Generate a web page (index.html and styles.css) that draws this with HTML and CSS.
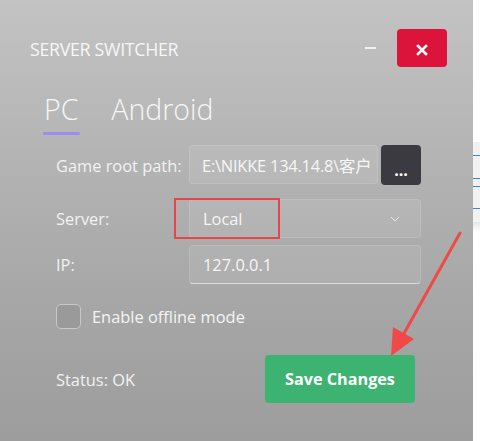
FILE: index.html
```html
<!DOCTYPE html>
<html>
<head>
<meta charset="utf-8">
<link rel="stylesheet" href="styles.css">
</head>
<body>
<div class="screen">
  <div class="window">
    <div class="titlebar">
      <span class="title">SERVER SWITCHER</span>
      <span class="minimize"></span>
      <button class="close">
        <svg width="12" height="12" viewBox="0 0 12 12"><path d="M2 2 L10 10 M10 2 L2 10" stroke="#fff" stroke-width="2.6" stroke-linecap="square"/></svg>
      </button>
    </div>
    <div class="tabs">
      <div class="tab active">PC</div>
      <div class="tab">Android</div>
    </div>
    <div class="form">
      <div class="row row-path">
        <span class="label">Game root path:</span>
        <div class="path-group">
          <div class="field path-field"><span class="path-text">E:\NIKKE 134.14.8\客户</span></div>
          <button class="browse">...</button>
        </div>
      </div>
      <div class="row row-server">
        <span class="label">Server:</span>
        <div class="field select">
          <span>Local</span>
          <svg class="chevron" width="10" height="6" viewBox="0 0 10 6"><path d="M1 1 L5 5 L9 1" fill="none" stroke="#e8e8e8" stroke-width="1"/></svg>
        </div>
      </div>
      <div class="row row-ip">
        <span class="label">IP:</span>
        <div class="field ip">127.0.0.1</div>
      </div>
      <label class="check-row">
        <span class="checkbox"></span>
        <span class="check-label">Enable offline mode</span>
      </label>
      <div class="footer">
        <span class="status">Status: OK</span>
        <button class="save">Save Changes</button>
      </div>
    </div>
  </div>
  <div class="behind">
    <div class="behind-panel">
      <div class="bline l1"></div>
      <div class="bline l2"></div>
      <div class="bline l3"></div>
      <div class="bline l4"></div>
    </div>
    <div class="behind-shadow"></div>
  </div>
  <div class="annot-rect"></div>
  <svg class="annot-arrow" width="480" height="441" viewBox="0 0 480 441">
    <line x1="460" y1="233" x2="402" y2="337" stroke="#ee4a4a" stroke-width="3" stroke-linecap="round"/>
    <polygon points="393,327 414,339 391,356" fill="#ee4a4a"/>
  </svg>
</div>
</body>
</html>
```
FILE: styles.css
```css
* { box-sizing: border-box; }
html, body { margin: 0; padding: 0; }
body {
  width: 480px;
  height: 441px;
  overflow: hidden;
  font-family: "Open Sans", "Noto Sans", "Noto Sans CJK SC", sans-serif;
  color: #f4f4f4;
}
.screen {
  position: relative;
  display: flex;
  width: 480px;
  height: 441px;
}
.window {
  width: 473px;
  height: 441px;
  background: linear-gradient(180deg, #c3c3c3 0%, #b4b4b4 35%, #a6a6a6 70%, #9d9d9d 100%);
  padding: 29px 26px 0 30px;
}
.titlebar {
  display: flex;
  align-items: center;
  height: 38px;
}
.title {
  font-size: 17.8px;
  letter-spacing: -0.3px;
  color: #f7f7f7;
  flex: 1;
  padding-top: 1px;
}
.minimize {
  width: 11px;
  height: 1.5px;
  background: #f2f2f2;
  margin-right: 21px;
}
.close {
  width: 50px;
  height: 38px;
  border: none;
  border-radius: 4px;
  background: #dc143c;
  display: flex;
  align-items: center;
  justify-content: center;
  padding: 0;
  padding-top: 3px;
}
.tabs {
  display: flex;
  gap: 33px;
  margin-top: 22px;
  padding-left: 14px;
}
.tab {
  font-size: 28.5px;
  font-weight: 300;
  line-height: 40px;
  color: #f6f6f6;
  padding-bottom: 6px;
  position: relative;
}
.tab.active::after {
  content: "";
  position: absolute;
  left: -1px;
  right: -2px;
  bottom: 0;
  height: 3px;
  border-radius: 2px;
  background: #9b8cf2;
}
.form {
  padding-left: 26px;
  margin-top: 10px;
}
.row {
  display: grid;
  grid-template-columns: 133px 232px;
  align-items: center;
}
.label {
  font-size: 16.4px;
  color: #f2f2f2;
}
.field {
  height: 39px;
  background: rgba(255,255,255,0.08);
  border: 1px solid rgba(255,255,255,0.12);
  border-radius: 4px;
  font-size: 16.4px;
  color: #f6f6f6;
  display: flex;
  align-items: center;
  padding-left: 13px;
  overflow: hidden;
  white-space: nowrap;
}
.path-group {
  display: flex;
  gap: 3px;
}
.path-field {
  width: 189px;
  padding-left: 12px;
  padding-right: 0;
}
.path-text {
  letter-spacing: -0.2px;
}
.browse {
  width: 40px;
  height: 40px;
  border: none;
  border-radius: 4px;
  background: #3b3a40;
  color: #fff;
  font-family: inherit;
  font-size: 16px;
  font-weight: 700;
  padding: 10px 0 0;
}
.row-server { margin-top: 14px; }
.select {
  justify-content: space-between;
  padding-right: 20px;
}
.row-ip { margin-top: 7px; }
.ip {
  border-bottom: 1.5px solid #dcdcdc;
}
.check-row {
  display: flex;
  align-items: center;
  gap: 11px;
  margin-top: 20px;
}
.checkbox {
  width: 25px;
  height: 25px;
  border: 1.5px solid #c8c8c8;
  border-radius: 5px;
  background: #9a9a9a;
}
.check-label {
  font-size: 16.4px;
  color: #f4f4f4;
}
.footer {
  display: grid;
  grid-template-columns: 209px 150px;
  align-items: center;
  margin-top: 26px;
}
.status {
  font-size: 16.4px;
  color: #f2f2f2;
}
.save {
  height: 48px;
  border: none;
  border-radius: 4px;
  background: #3cb371;
  color: #fff;
  font-family: inherit;
  font-size: 16.2px;
  font-weight: 700;
  padding: 0;
}
.behind {
  flex: 1;
  background: #ffffff;
  display: flex;
  flex-direction: column;
}
.behind-panel {
  margin-top: 142px;
  height: 80px;
  background: #f2f2f2;
  position: relative;
}
.behind-shadow {
  height: 10px;
  background: linear-gradient(#e6e6e6, #ffffff);
}
.bline {
  position: absolute;
  left: 0;
  right: 0;
  height: 1px;
  background: #3d86d4;
}
.l1 { top: 13px; }
.l2 { top: 36px; }
.l3 { top: 44px; }
.l4 { top: 66px; }
.annot-rect {
  position: absolute;
  left: 174px;
  top: 198px;
  width: 106px;
  height: 41px;
  border: 2.5px solid #e84548;
}
.annot-arrow {
  position: absolute;
  left: 0;
  top: 0;
  pointer-events: none;
}
```
